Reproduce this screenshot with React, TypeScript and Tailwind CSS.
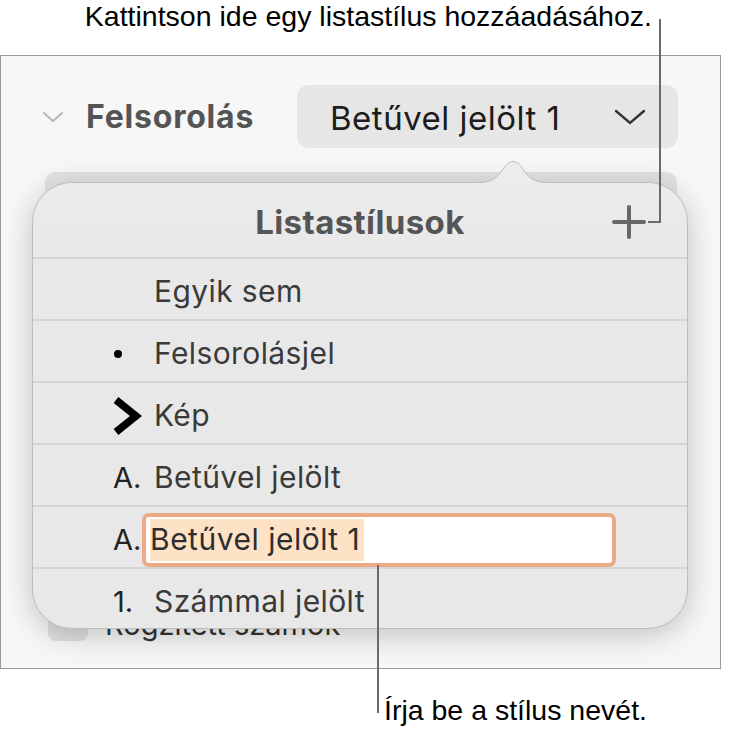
import React from 'react';

const ui = { fontFamily: 'Inter, "Noto Sans", sans-serif' };
const note = { fontFamily: '"Liberation Sans", Arial, sans-serif' };

type Row = { marker: React.ReactNode; label: string; editing?: boolean };

const Bullet = () => <span className="block w-[8px] h-[8px] rounded-full bg-black ml-[1px]" />;

const ImageMarker = () => (
  <svg width="30" height="40" viewBox="0 0 30 40">
    <path d="M3 4 L23 20 L3 36" fill="none" stroke="#000" strokeWidth="7.5" strokeLinejoin="miter" />
  </svg>
);

const rows: Row[] = [
  { marker: null, label: 'Egyik sem' },
  { marker: <Bullet />, label: 'Felsorolásjel' },
  { marker: <ImageMarker />, label: 'Kép' },
  { marker: <span className="text-[29px]">A.</span>, label: 'Betűvel jelölt' },
  { marker: <span className="text-[29px]">A.</span>, label: 'Betűvel jelölt 1', editing: true },
  { marker: <span className="text-[29px]">1.</span>, label: 'Számmal jelölt' },
];

function StyleRow({ row }: { row: Row }) {
  return (
    <div className="h-[62px] flex items-center border-t-2 border-[#d5d5d5] pl-[80px] pt-[5px]">
      <div className="w-[41px] flex items-center text-[#222]">{row.marker}</div>
      {row.editing ? (
        <div className="ml-[-12px] w-[474px] h-[54px] rounded-[7px] border-[4px] border-[#eca985] bg-white flex items-center">
          <span className="ml-[4px] h-[42px] flex items-center bg-[#fde2c6] pr-[4px] text-[30px] tracking-[0.5px] text-[#2e2e2e]">
            {row.label}
          </span>
        </div>
      ) : (
        <span className="text-[30px] tracking-[0.4px] text-[#3a3a3a]">{row.label}</span>
      )}
    </div>
  );
}

export default function App() {
  return (
    <div className="relative w-[729px] h-[729px] bg-white overflow-hidden" style={ui}>
      {/* top callout */}
      <div className="h-[55px] flex justify-end pr-[77px]">
        <span className="text-[28.5px] leading-[32px] text-black" style={note}>
          Kattintson ide egy listastílus hozzáadásához.
        </span>
      </div>

      {/* inspector panel */}
      <div className="w-[721px] h-[614px] border border-[#9a9a9a] bg-[#f7f7f7] flex flex-col">
        <div className="flex items-center mt-[29px] h-[63px]">
          <svg width="24" height="14" viewBox="0 0 24 14" className="ml-[40px]">
            <path d="M3 3 L12 11 L21 3" fill="none" stroke="#b9b9b9" strokeWidth="2.2" strokeLinecap="round" />
          </svg>
          <div className="ml-[21px] w-[211px]">
            <span className="text-[32px] font-bold tracking-[0.8px] text-[#545454]">Felsorolás</span>
          </div>
          <div className="w-[381px] h-[63px] rounded-[12px] bg-[#e6e6e6] flex items-center pl-[33px] pr-[32px] pt-[4px]">
            <span className="text-[33px] tracking-[0.5px] text-[#1c1c1c] flex-1">Betűvel jelölt 1</span>
            <svg width="32" height="18" viewBox="0 0 32 18" className="mt-[-4px]">
              <path d="M2 3 L16 15 L30 3" fill="none" stroke="#333" strokeWidth="2.4" strokeLinecap="round" />
            </svg>
          </div>
        </div>
        <div className="ml-[44px] mt-[24px] w-[632px] h-[60px] rounded-[10px] bg-gradient-to-b from-[#e2e2e2] to-[#ececec]" />
        <div className="flex-1" />
        <div className="flex items-center ml-[47px] mb-[22px] gap-[17px]">
          <div className="w-[40px] h-[34px] rounded-[8px] bg-[#e0e0e0]" />
          <span className="text-[29px] text-[#333]">Rögzített számok</span>
        </div>
      </div>

      {/* list style popover */}
      <div className="absolute left-[32px] top-[182px] w-[656px] h-[447px] rounded-[40px] border border-[#bdbdbd] bg-[#e8e8e8] shadow-[0_6px_30px_rgba(0,0,0,0.22)]">
        <svg width="90" height="30" viewBox="0 0 90 30" className="absolute left-[435px] top-[-29px]">
          <path d="M0 29 C22 29 27 27 35 15 C41 5 49 5 55 15 C63 27 68 29 90 29 Z" fill="#ececec" />
          <path d="M0 29 C22 29 27 27 35 15 C41 5 49 5 55 15 C63 27 68 29 90 29" fill="none" stroke="#bdbdbd" strokeWidth="1" />
        </svg>
        <div className="h-[74px] flex items-center justify-center relative rounded-t-[40px] bg-gradient-to-b from-[#ececec] to-[#e8e8e8] pt-[5px]">
          <span className="text-[33px] font-bold tracking-[0.4px] text-[#555]">Listastílusok</span>
          <svg width="34" height="36" viewBox="0 0 34 36" className="absolute left-[579px] top-[21px]">
            <path d="M2 18 H32 M17 3 V33" stroke="#676767" strokeWidth="4" strokeLinecap="round" />
          </svg>
        </div>
        {rows.map((r) => (
          <StyleRow key={r.label} row={r} />
        ))}
      </div>

      {/* leader lines */}
      <div className="absolute left-[659px] top-[19px] w-[2px] h-[204px] bg-[#6a6a6a]" />
      <div className="absolute left-[648px] top-[221px] w-[13px] h-[2px] bg-[#6a6a6a]" />
      <div className="absolute left-[377px] top-[565px] w-[2px] h-[148px] bg-[#6a6a6a]" />

      {/* bottom callout */}
      <span className="absolute left-[384px] top-[694px] text-[28.5px] leading-[32px] text-black" style={note}>
        Írja be a stílus nevét.
      </span>
    </div>
  );
}
